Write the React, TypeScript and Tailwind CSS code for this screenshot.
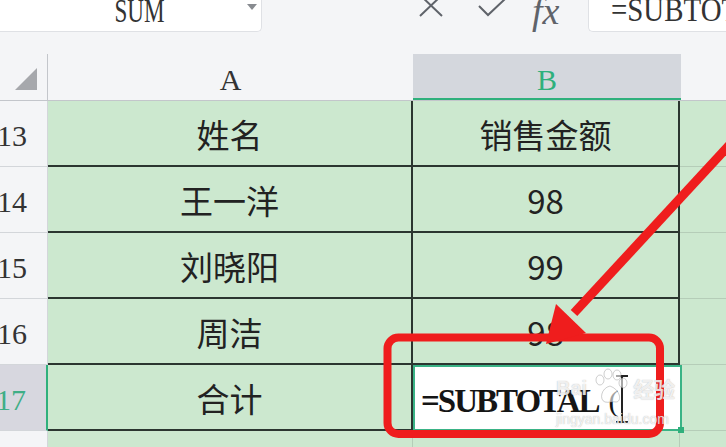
import React from "react";

const serif = "font-['Liberation_Serif','Times_New_Roman',serif]";
const cjk = "font-['Noto_Sans_CJK_SC','Noto_Sans',sans-serif]";

type Row = { n: number; a: string; b: string };

const rows: Row[] = [
  { n: 13, a: "姓名", b: "销售金额" },
  { n: 14, a: "王一洋", b: "98" },
  { n: 15, a: "刘晓阳", b: "99" },
  { n: 16, a: "周洁", b: "98" },
];

const Toolbar = () => (
  <div className="flex h-[33px] shrink-0">
    <div className="relative h-[32px] w-[262px] shrink-0 rounded-br-[5px] border-r border-b border-[#dfe1e5] bg-white">
      <div className={`ml-[18px] mt-[-6px] scale-x-[0.68] text-center text-[34px] leading-none text-[#333] ${serif}`}>SUM</div>
      <svg className="absolute right-[4px] top-[4px]" width="10" height="6" viewBox="0 0 10 6">
        <path d="M0 0 L10 0 L5 6 Z" fill="#888b90" />
      </svg>
    </div>
    <div className="flex w-[326px] shrink-0 items-start">
      <svg className="ml-[156px] mt-[-6px]" width="26" height="24" viewBox="0 0 26 24">
        <path d="M2 1 L24 22 M24 1 L2 22" stroke="#5f636a" strokeWidth="2" fill="none" />
      </svg>
      <svg className="ml-[34px] mt-[-1px]" width="28" height="18" viewBox="0 0 28 18">
        <path d="M1 7 L10 16 L27 0" stroke="#5f636a" strokeWidth="2" fill="none" />
      </svg>
      <div className={`ml-[26px] mt-[-8px] text-[38px] italic leading-none text-[#5f636a] ${serif}`}>fx</div>
    </div>
    <div className="flex h-[32px] flex-1 items-start overflow-hidden rounded-bl-[5px] border-l border-b border-[#dfe1e5] bg-white">
      <div className={`ml-[22px] mt-[-7px] origin-left scale-x-[0.85] whitespace-nowrap text-[34px] leading-none text-[#333] ${serif}`}>
        =SUBTOTAL(
      </div>
    </div>
  </div>
);

const HeaderRow = () => (
  <div className="flex h-[47px] shrink-0 border-b border-[#c3c6cb]">
    <div className="flex w-[48px] shrink-0 items-start border-r border-[#c3c6cb]">
      <svg className="ml-[15px] mt-[14px]" width="22" height="22" viewBox="0 0 22 22">
        <path d="M22 0 L22 22 L0 22 Z" fill="#a6a8ac" />
      </svg>
    </div>
    <div className={`flex w-[365px] shrink-0 items-center justify-center pt-[4px] text-[30px] text-[#333] ${serif}`}>A</div>
    <div className={`flex w-[268px] shrink-0 items-center justify-center border-b-2 border-[#2fb07c] bg-[#d4d7dd] pt-[6px] text-[30px] text-[#2fb07c] ${serif}`}>
      B
    </div>
    <div className="flex-1" />
  </div>
);

const BodyRow = ({ row }: { row: Row }) => (
  <div className="flex h-[66px] shrink-0">
    <div className={`flex w-[48px] shrink-0 items-center justify-end overflow-hidden border-r border-b border-[#d3d6da] bg-[#f4f5f7] pr-[20px] pt-[4px] text-[30px] leading-none text-[#333] ${serif}`}>
      {row.n}
    </div>
    <div className={`flex w-[365px] shrink-0 items-center justify-center border-r-2 border-b-2 border-[#2b3630] bg-[#cce8cf] pt-[4px] text-[33px] text-[#222] ${cjk}`}>
      {row.a}
    </div>
    <div className={`flex w-[267px] shrink-0 items-center justify-center border-r-2 border-b-2 border-[#2b3630] bg-[#cce8cf] pt-[4px] text-[33px] text-[#222] ${cjk}`}>
      {row.b}
    </div>
    <div className="flex-1 border-b border-[#b5cdb8] bg-[#cce8cf]" />
  </div>
);

const EditRow = () => (
  <div className="flex h-[66px] shrink-0">
    <div className={`flex w-[48px] shrink-0 items-center justify-end overflow-hidden border-r-2 border-b border-r-[#2fb07c] border-b-[#d3d6da] bg-[#d7d7df] pr-[20px] pt-[4px] text-[30px] leading-none text-[#3fae86] ${serif}`}>
      17
    </div>
    <div className={`flex w-[365px] shrink-0 items-center justify-center border-r-2 border-b-2 border-[#2b3630] bg-[#cce8cf] pt-[4px] text-[33px] text-[#222] ${cjk}`}>
      合计
    </div>
    <div className="relative flex w-[269px] shrink-0 items-center border-2 border-[#3ab386] bg-white pl-[6px]">
      <span className={`pt-[6px] text-[33px] font-bold leading-none tracking-[-2px] text-[#151515] ${serif}`}>=SUBTOTAL</span>
      <span className={`ml-[10px] pt-[6px] text-[30px] leading-none text-[#151515] ${serif}`}>(</span>
      <span className="absolute left-[206px] top-[8px] h-[48px] w-[2px] bg-[#222]" />
      <span className="absolute left-[201px] top-[8px] h-[2px] w-[12px] bg-[#222]" />
      <span className="absolute left-[201px] top-[54px] h-[2px] w-[12px] bg-[#222]" />
      <span className="absolute -bottom-[4px] -right-[4px] h-[6px] w-[6px] bg-[#2fb07c]" />
    </div>
    <div className="flex-1 border-b border-[#b5cdb8] bg-[#cce8cf]" />
  </div>
);

const TailRow = () => (
  <div className="flex flex-1">
    <div className="w-[48px] shrink-0 border-r border-[#d3d6da] bg-[#f4f5f7]" />
    <div className="w-[365px] shrink-0 border-r border-[#b5cdb8] bg-[#cce8cf]" />
    <div className="w-[267px] shrink-0 border-r border-[#b5cdb8] bg-[#cce8cf]" />
    <div className="flex-1 bg-[#cce8cf]" />
  </div>
);

const Annotation = () => (
  <svg className="pointer-events-none absolute inset-0" width="726" height="447" viewBox="0 0 726 447">
    <rect x="387.5" y="337.5" width="272.5" height="96.5" rx="11" fill="none" stroke="#ef1d1d" strokeWidth="8" />
    <path d="M760 112 L574 313" stroke="#ef1d1d" strokeWidth="9" strokeLinecap="butt" />
    <path d="M546 344 L556 304 L586 333 Z" fill="#ef1d1d" />
  </svg>
);

const Watermark = () => (
  <div className="pointer-events-none absolute left-[556px] top-[368px] text-white/80 [text-shadow:0_0_1px_rgba(90,90,90,0.5)]">
    <div className="flex items-center">
      <span className="font-['Liberation_Sans',sans-serif] text-[20px] font-bold leading-none">Bai</span>
      <svg className="ml-[4px]" width="38" height="40" viewBox="0 0 38 40">
        <g fill="rgba(255,255,255,0.6)" stroke="rgba(120,120,120,0.45)" strokeWidth="0.8">
          <ellipse cx="9" cy="12" rx="4" ry="5" />
          <ellipse cx="17" cy="6" rx="4" ry="5" />
          <ellipse cx="26" cy="7" rx="4" ry="5" />
          <ellipse cx="32" cy="15" rx="4" ry="5" />
          <path d="M19 18 C10 20 8 32 14 34 C18 35 21 33 25 34 C31 34 30 22 19 18 Z" />
        </g>
      </svg>
      <span className={`ml-[4px] text-[21px] font-bold leading-none ${cjk}`}>经验</span>
    </div>
    <div className="mt-[4px] font-['Liberation_Sans',sans-serif] text-[14px] leading-none">jingyan.baidu.com</div>
  </div>
);

export default function App() {
  return (
    <div className="relative flex h-[447px] w-[726px] flex-col overflow-hidden bg-[#f4f5f7]">
      <Toolbar />
      <div className="h-[21px] shrink-0" />
      <HeaderRow />
      {rows.map((r) => (
        <BodyRow key={r.n} row={r} />
      ))}
      <EditRow />
      <TailRow />
      <Annotation />
      <Watermark />
    </div>
  );
}
